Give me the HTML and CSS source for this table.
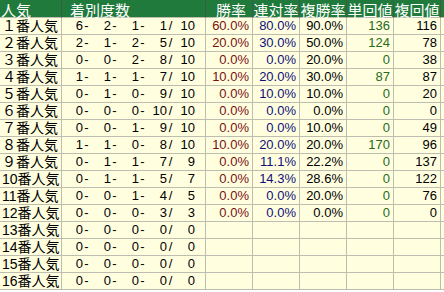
FILE: index.html
```html
<!DOCTYPE html>
<html lang="ja">
<head>
<meta charset="utf-8">
<link rel="stylesheet" href="styles.css">
</head>
<body>
<table class="stats">
<thead>
<tr>
<th class="c-rank">人気</th>
<th class="c-rec">着別度数</th>
<th class="c-val c-win">勝率</th>
<th class="c-val">連対率</th>
<th class="c-val">複勝率</th>
<th class="c-val">単回値</th>
<th class="c-val">複回値</th>
<th class="c-extra"></th>
</tr>
</thead>
<tbody>
<tr><td class="rank">１番人気</td><td class="rec"><span class="n2">6</span><span class="s">-</span><span class="n3">2</span><span class="s">-</span><span class="n3">1</span><span class="s">-</span><span class="n3">1</span><span class="s">/</span><span class="n3">10</span></td><td class="win">60.0%</td><td class="ren">80.0%</td><td class="fuku">90.0%</td><td class="tan">136</td><td class="fk">116</td><td></td></tr>
<tr><td class="rank">２番人気</td><td class="rec"><span class="n2">2</span><span class="s">-</span><span class="n3">1</span><span class="s">-</span><span class="n3">2</span><span class="s">-</span><span class="n3">5</span><span class="s">/</span><span class="n3">10</span></td><td class="win">20.0%</td><td class="ren">30.0%</td><td class="fuku">50.0%</td><td class="tan">124</td><td class="fk">78</td><td></td></tr>
<tr><td class="rank">３番人気</td><td class="rec"><span class="n2">0</span><span class="s">-</span><span class="n3">0</span><span class="s">-</span><span class="n3">2</span><span class="s">-</span><span class="n3">8</span><span class="s">/</span><span class="n3">10</span></td><td class="win">0.0%</td><td class="ren">0.0%</td><td class="fuku">20.0%</td><td class="tan">0</td><td class="fk">38</td><td></td></tr>
<tr><td class="rank">４番人気</td><td class="rec"><span class="n2">1</span><span class="s">-</span><span class="n3">1</span><span class="s">-</span><span class="n3">1</span><span class="s">-</span><span class="n3">7</span><span class="s">/</span><span class="n3">10</span></td><td class="win">10.0%</td><td class="ren">20.0%</td><td class="fuku">30.0%</td><td class="tan">87</td><td class="fk">87</td><td></td></tr>
<tr><td class="rank">５番人気</td><td class="rec"><span class="n2">0</span><span class="s">-</span><span class="n3">1</span><span class="s">-</span><span class="n3">0</span><span class="s">-</span><span class="n3">9</span><span class="s">/</span><span class="n3">10</span></td><td class="win">0.0%</td><td class="ren">10.0%</td><td class="fuku">10.0%</td><td class="tan">0</td><td class="fk">20</td><td></td></tr>
<tr><td class="rank">６番人気</td><td class="rec"><span class="n2">0</span><span class="s">-</span><span class="n3">0</span><span class="s">-</span><span class="n3">0</span><span class="s">-</span><span class="n3">10</span><span class="s">/</span><span class="n3">10</span></td><td class="win">0.0%</td><td class="ren">0.0%</td><td class="fuku">0.0%</td><td class="tan">0</td><td class="fk">0</td><td></td></tr>
<tr><td class="rank">７番人気</td><td class="rec"><span class="n2">0</span><span class="s">-</span><span class="n3">0</span><span class="s">-</span><span class="n3">1</span><span class="s">-</span><span class="n3">9</span><span class="s">/</span><span class="n3">10</span></td><td class="win">0.0%</td><td class="ren">0.0%</td><td class="fuku">10.0%</td><td class="tan">0</td><td class="fk">49</td><td></td></tr>
<tr><td class="rank">８番人気</td><td class="rec"><span class="n2">1</span><span class="s">-</span><span class="n3">1</span><span class="s">-</span><span class="n3">0</span><span class="s">-</span><span class="n3">8</span><span class="s">/</span><span class="n3">10</span></td><td class="win">10.0%</td><td class="ren">20.0%</td><td class="fuku">20.0%</td><td class="tan">170</td><td class="fk">96</td><td></td></tr>
<tr><td class="rank">９番人気</td><td class="rec"><span class="n2">0</span><span class="s">-</span><span class="n3">1</span><span class="s">-</span><span class="n3">1</span><span class="s">-</span><span class="n3">7</span><span class="s">/</span><span class="n3">9</span></td><td class="win">0.0%</td><td class="ren">11.1%</td><td class="fuku">22.2%</td><td class="tan">0</td><td class="fk">137</td><td></td></tr>
<tr><td class="rank">10番人気</td><td class="rec"><span class="n2">0</span><span class="s">-</span><span class="n3">1</span><span class="s">-</span><span class="n3">1</span><span class="s">-</span><span class="n3">5</span><span class="s">/</span><span class="n3">7</span></td><td class="win">0.0%</td><td class="ren">14.3%</td><td class="fuku">28.6%</td><td class="tan">0</td><td class="fk">122</td><td></td></tr>
<tr><td class="rank">11番人気</td><td class="rec"><span class="n2">0</span><span class="s">-</span><span class="n3">0</span><span class="s">-</span><span class="n3">1</span><span class="s">-</span><span class="n3">4</span><span class="s">/</span><span class="n3">5</span></td><td class="win">0.0%</td><td class="ren">0.0%</td><td class="fuku">20.0%</td><td class="tan">0</td><td class="fk">76</td><td></td></tr>
<tr><td class="rank">12番人気</td><td class="rec"><span class="n2">0</span><span class="s">-</span><span class="n3">0</span><span class="s">-</span><span class="n3">0</span><span class="s">-</span><span class="n3">3</span><span class="s">/</span><span class="n3">3</span></td><td class="win">0.0%</td><td class="ren">0.0%</td><td class="fuku">0.0%</td><td class="tan">0</td><td class="fk">0</td><td></td></tr>
<tr><td class="rank">13番人気</td><td class="rec"><span class="n2">0</span><span class="s">-</span><span class="n3">0</span><span class="s">-</span><span class="n3">0</span><span class="s">-</span><span class="n3">0</span><span class="s">/</span><span class="n3">0</span></td><td></td><td></td><td></td><td></td><td></td><td></td></tr>
<tr><td class="rank">14番人気</td><td class="rec"><span class="n2">0</span><span class="s">-</span><span class="n3">0</span><span class="s">-</span><span class="n3">0</span><span class="s">-</span><span class="n3">0</span><span class="s">/</span><span class="n3">0</span></td><td></td><td></td><td></td><td></td><td></td><td></td></tr>
<tr><td class="rank">15番人気</td><td class="rec"><span class="n2">0</span><span class="s">-</span><span class="n3">0</span><span class="s">-</span><span class="n3">0</span><span class="s">-</span><span class="n3">0</span><span class="s">/</span><span class="n3">0</span></td><td></td><td></td><td></td><td></td><td></td><td></td></tr>
<tr><td class="rank">16番人気</td><td class="rec"><span class="n2">0</span><span class="s">-</span><span class="n3">0</span><span class="s">-</span><span class="n3">0</span><span class="s">-</span><span class="n3">0</span><span class="s">/</span><span class="n3">0</span></td><td></td><td></td><td></td><td></td><td></td><td></td></tr>
</tbody>
</table>
</body>
</html>
```

FILE: styles.css
```css
html, body {
  margin: 0;
  padding: 0;
  background: #ffffff;
  overflow: hidden;
}

.stats {
  border-collapse: separate;
  border-spacing: 0;
  table-layout: fixed;
  width: 471px;
  font-family: "Liberation Sans", "Noto Sans CJK JP", sans-serif;
  font-size: 13px;
  color: #000;
}

.stats th,
.stats td {
  box-sizing: border-box;
  padding: 0;
  border-right: 1px solid #bdbdb0;
  border-bottom: 1px solid #bdbdb0;
  white-space: nowrap;
}

.stats th {
  height: 18px;
  padding-top: 2px;
  background: #1f7a3c;
  color: #ffffff;
  font-family: "Noto Sans CJK JP", sans-serif;
  font-weight: normal;
  font-size: 15px;
  line-height: 15px;
  border-right-color: #3e5a45;
  text-align: center;
  vertical-align: top;
}

.stats td {
  height: 17px;
  line-height: 16px;
  background: #ffffe0;
  text-align: right;
  padding-right: 3px;
  overflow: hidden;
}

.stats th.c-rank { width: 62px; text-align: left; padding-left: 1px; }
.stats th.c-rec { width: 144px; text-align: left; padding-left: 8px; }
.stats th.c-val { width: 47px; }
.stats th.c-win { text-align: left; padding-left: 10px; }
.stats th.c-extra { width: 30px; }

.stats td.rank {
  text-align: left;
  padding-left: 2px;
  padding-right: 0;
  font-size: 14px;
}

.stats td.rec {
  text-align: left;
  padding-left: 7px;
  padding-right: 0;
}

.rec span {
  display: inline-block;
  text-align: right;
}

.rec .n2 { width: 14px; }
.rec .n3 { width: 21px; }
.rec .s { width: 7px; text-align: center; }

.win { color: #7a1010; }
.ren { color: #10107a; }
.fuku { color: #000000; }
.tan { color: #2a6a1a; }
.fk { color: #000000; }
```
